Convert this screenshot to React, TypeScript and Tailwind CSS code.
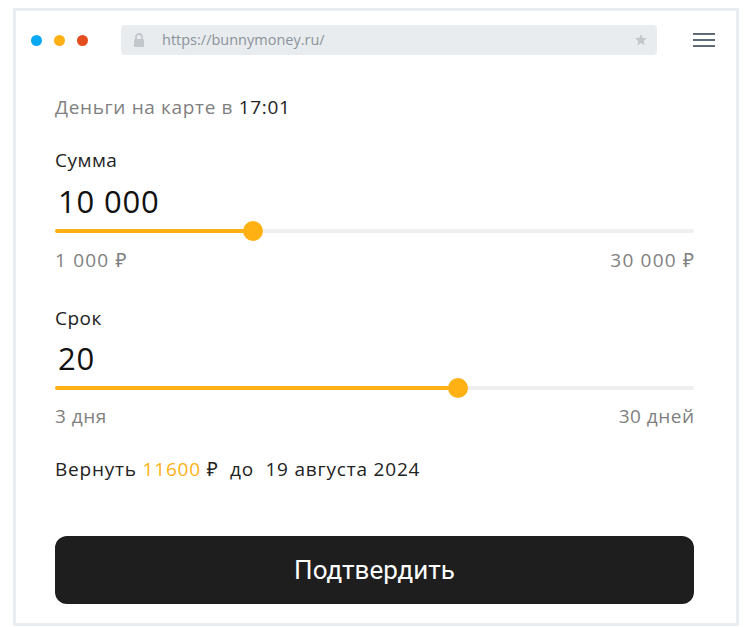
import React from 'react';

const font = { fontFamily: '"Open Sans", "Noto Sans", sans-serif' };

const Slider: React.FC<{ percent: number }> = ({ percent }) => (
  <div className="relative h-[20px] flex items-center">
    <div className="w-full h-[4px] rounded-full bg-[#efefef]" />
    <div className="absolute left-0 h-[4px] rounded-full bg-[#ffb114]" style={{ width: `${percent}%` }} />
    <div
      className="absolute w-[20px] h-[20px] rounded-full bg-[#ffb114] -translate-x-1/2"
      style={{ left: `${percent}%` }}
    />
  </div>
);

const App: React.FC = () => {
  return (
    <div className="w-[751px] h-[627px] bg-white pt-[8px] pl-[13px]" style={font}>
      <div className="w-[726px] h-[618px] border-[3px] border-[#e9edf0] bg-white">
        <div className="flex items-center h-[30px] mt-[14px]">
          <div className="flex items-center gap-[12px] ml-[15px]">
            <span className="w-[11px] h-[11px] rounded-full bg-[#0aa9f6]" />
            <span className="w-[11px] h-[11px] rounded-full bg-[#ffb014]" />
            <span className="w-[11px] h-[11px] rounded-full bg-[#e54c1e]" />
          </div>
          <div className="ml-[33px] w-[536px] h-[30px] rounded-[4px] bg-[#e9ecef] flex items-center">
            <svg width="12" height="14" viewBox="0 0 12 14" className="ml-[12px]">
              <path d="M3 6V4a3 3 0 0 1 6 0v2" fill="none" stroke="#c2c7cc" strokeWidth="1.8" />
              <rect x="1" y="6" width="10" height="8" rx="1" fill="#c2c7cc" />
            </svg>
            <span className="ml-[17px] text-[14.5px] text-[#8b939b] leading-none">https://bunnymoney.ru/</span>
            <svg width="14" height="14" viewBox="0 0 24 24" className="ml-auto mr-[9px]">
              <path
                d="M12 2l2.9 6.6 7.1.6-5.4 4.7 1.6 7L12 17.2 5.8 20.9l1.6-7L2 9.2l7.1-.6z"
                fill="#c2c7cc"
              />
            </svg>
          </div>
          <div className="ml-[36px] flex flex-col gap-[3.5px]">
            <span className="w-[22px] h-[2.5px] bg-[#5f6b77]" />
            <span className="w-[22px] h-[2.5px] bg-[#5f6b77]" />
            <span className="w-[22px] h-[2.5px] bg-[#5f6b77]" />
          </div>
        </div>

        <div className="ml-[39px] w-[639px] text-[19px] tracking-[0.5px]">
          <p className="mt-[40px] leading-[24px] text-[#7f7f7f] tracking-[0.65px]">
            Деньги на карте в <span className="text-[#222]">17:01</span>
          </p>

          <p className="mt-[29px] leading-[24px] text-[#222]">Сумма</p>
          <p className="mt-[11px] ml-[3px] text-[31px] leading-[36px] text-[#111] tracking-[0.8px]">10 000</p>
          <div className="mt-[2px]">
            <Slider percent={31} />
          </div>
          <div className="mt-[7px] flex justify-between leading-[24px] text-[#7f7f7f]">
            <span className="tracking-[1.2px]">1 000 ₽</span>
            <span className="tracking-[1.2px] -mr-[1.2px]">30 000 ₽</span>
          </div>

          <p className="mt-[34px] leading-[24px] text-[#222]">Срок</p>
          <p className="mt-[10px] ml-[3px] text-[31px] leading-[36px] text-[#111] tracking-[0.8px]">20</p>
          <div className="mt-[2px]">
            <Slider percent={63} />
          </div>
          <div className="mt-[6px] flex justify-between leading-[24px] text-[#7f7f7f]">
            <span>3 дня</span>
            <span className="-mr-[0.5px]">30 дней</span>
          </div>

          <p className="mt-[29px] leading-[24px] text-[#222] whitespace-pre tracking-[0.8px]">
            Вернуть <span className="text-[#ffb114]">11600</span> ₽  до  19 августа 2024
          </p>

          <button
            className="mt-[55px] w-full h-[68px] rounded-[12px] bg-[#1e1e1e] text-white text-[26px] tracking-normal"
            style={{ fontFamily: 'Roboto, "Liberation Sans", sans-serif' }}
          >
            Подтвердить
          </button>
        </div>
      </div>
    </div>
  );
};

export default App;
